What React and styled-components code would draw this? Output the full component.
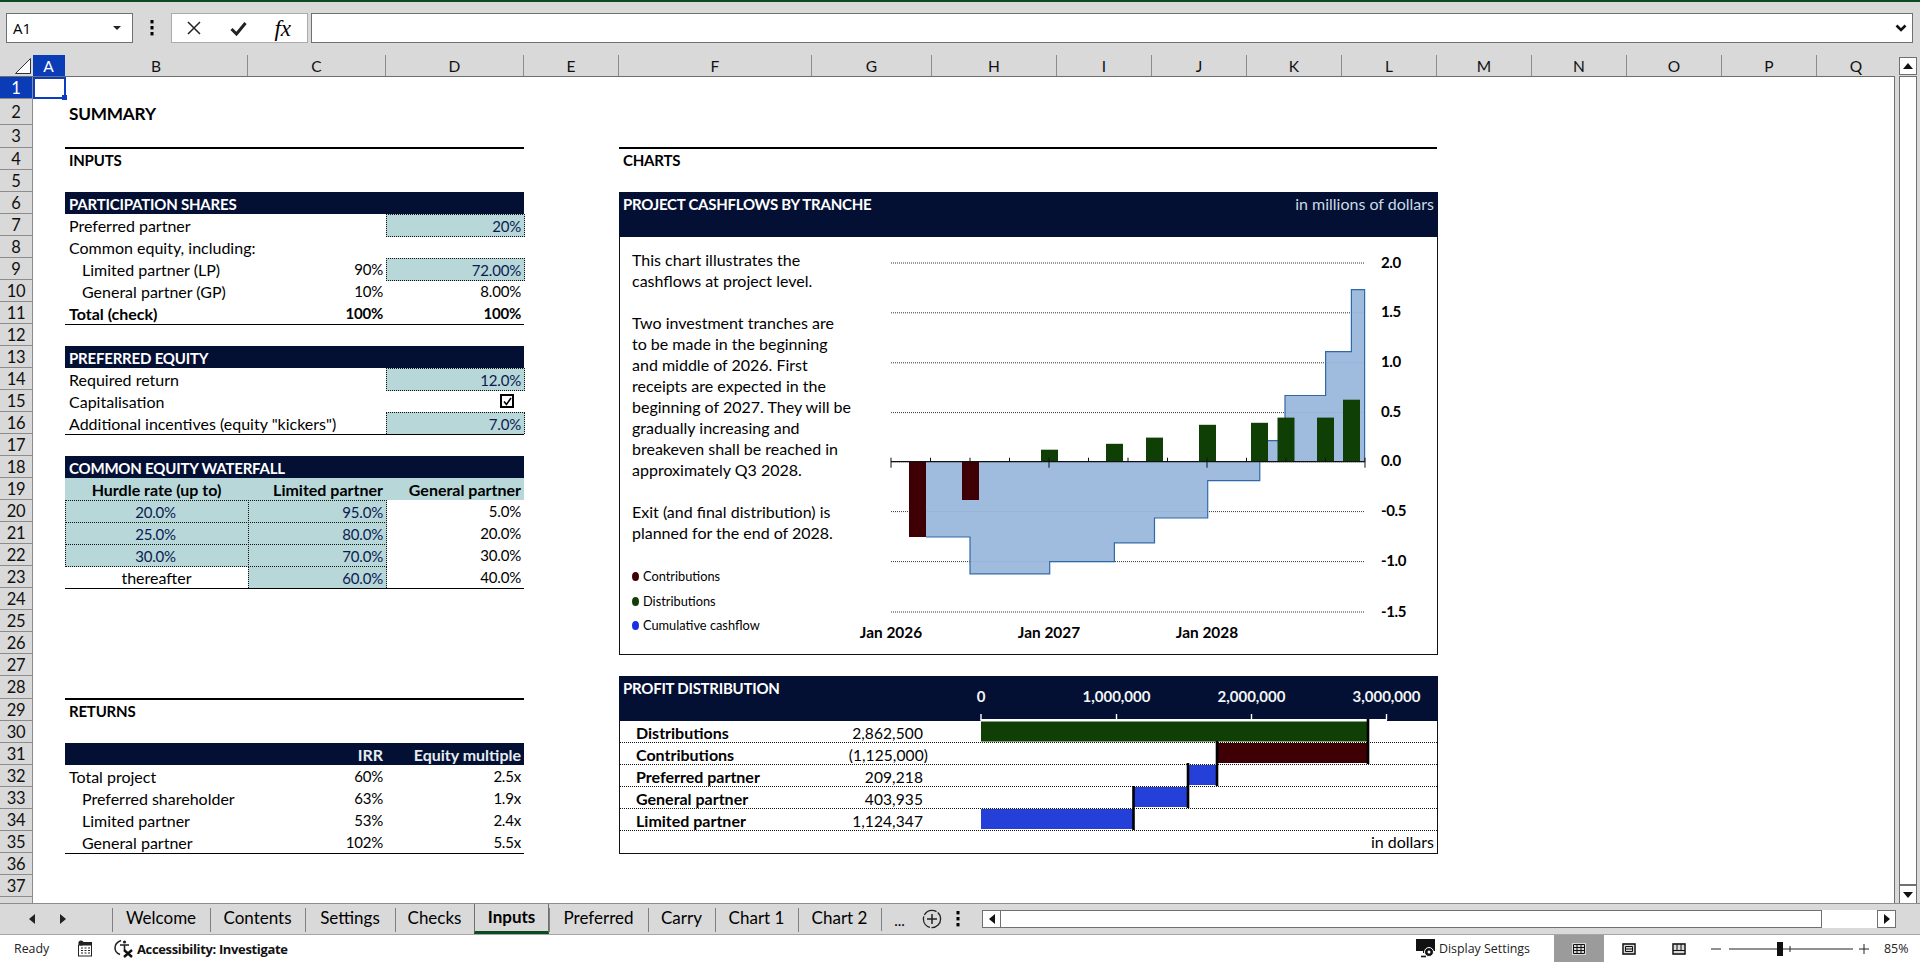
import React from 'react';
import styled, { createGlobalStyle } from 'styled-components';

const NAVY = '#030f33';
const TEAL = '#b7d7d9';
const GREEN = '#103f05';
const RED = '#3f0005';
const BLUE = '#2540d9';

const GlobalStyle = createGlobalStyle`
  html, body { margin: 0; padding: 0; background: #fff; }
  body { font-family: Lato, "Liberation Sans", sans-serif; color: #000; }
  * { box-sizing: border-box; }
`;

const Page = styled.div`
  width: 1920px;
  height: 962px;
  overflow: hidden;
  display: flex;
  flex-direction: column;
  background: #d9d9d9;
`;

/* formula bar */
const FormulaBar = styled.div`
  height: 55px;
  flex: none;
  display: flex;
  align-items: stretch;
  padding: 11px 7px 12px 6px;
  border-top: 2px solid #0c4a22;
`;
const NameBox = styled.div`
  width: 127px;
  background: #fff;
  border: 1px solid #707070;
  display: flex;
  align-items: center;
  justify-content: space-between;
  padding: 0 11px 0 6px;
  font-family: "Open Sans", sans-serif;
  font-size: 15px;
`;
const Caret = styled.span`
  width: 0;
  height: 0;
  border-left: 4px solid transparent;
  border-right: 4px solid transparent;
  border-top: 4px solid #222;
`;
const BarDots = styled.div`
  width: 38px;
  display: flex;
  align-items: center;
  justify-content: center;
`;
const FxBox = styled.div`
  width: 137px;
  background: #fff;
  border: 1px solid #ababab;
  display: flex;
  align-items: center;
  justify-content: space-between;
  padding: 0 16px 0 14px;
`;
const FxText = styled.span`
  font-family: "Liberation Serif", serif;
  font-style: italic;
  font-size: 23px;
  line-height: 1;
`;
const FormulaInput = styled.div`
  flex: 1;
  margin-left: 3px;
  background: #fff;
  border: 1px solid #707070;
  display: flex;
  align-items: center;
  justify-content: flex-end;
  padding-right: 5px;
`;

/* sheet frame */
const SheetFrame = styled.div`
  height: 848px;
  flex: none;
  display: flex;
`;
const MainArea = styled.div`
  width: 1895px;
  display: flex;
  flex-direction: column;
`;
const ColHead = styled.div`
  height: 22px;
  flex: none;
  display: flex;
  border-bottom: 1px solid #6e6e6e;
`;
const Corner = styled.div`
  width: 33px;
  display: flex;
  align-items: flex-end;
  justify-content: flex-end;
  padding: 0 2px 2px 0;
`;
const ColLabel = styled.div`
  width: ${(p) => p.$w}px;
  flex: none;
  display: flex;
  align-items: center;
  justify-content: center;
  font-size: 15.5px;
  padding-top: 1px;
  border-right: 1px solid ${(p) => (p.$active ? '#0b3cb8' : '#8c8c8c')};
  background: ${(p) => (p.$active ? '#0b3cb8' : 'transparent')};
  color: ${(p) => (p.$active ? '#fff' : '#111')};
  &:last-child { border-right: none; }
`;
const SheetBody = styled.div`
  flex: 1;
  display: flex;
  overflow: hidden;
`;
const RowHeads = styled.div`
  width: 33px;
  flex: none;
  display: flex;
  flex-direction: column;
  border-right: 1px solid #8c8c8c;
`;
const RowLabel = styled.div`
  height: ${(p) => p.$h}px;
  flex: none;
  display: flex;
  align-items: center;
  justify-content: center;
  font-size: 16.5px;
  letter-spacing: -0.3px;
  border-bottom: 1px solid #8c8c8c;
  background: ${(p) => (p.$active ? '#0b3cb8' : 'transparent')};
  color: ${(p) => (p.$active ? '#fff' : '#111')};
`;
const Cells = styled.div`
  flex: 1;
  background: #fff;
  display: grid;
  overflow: hidden;
  border-right: 1px solid #707070;
  grid-template-columns: ${(p) => p.$cols};
  grid-template-rows: ${(p) => p.$rows};
  font-size: 16px;
`;
const SelectedCell = styled.div`
  grid-column: 1;
  grid-row: 1;
  position: relative;
  border: 2px solid #0b3cc4;
  margin: 0 -1px 0 0;
  &::after {
    content: '';
    position: absolute;
    right: -3px;
    bottom: -3px;
    width: 5px;
    height: 5px;
    background: #0b3cc4;
  }
`;
const SheetTitle = styled.div`
  grid-column: 2 / 5;
  grid-row: 2;
  display: flex;
  align-items: center;
  padding: 2px 0 0 4px;
  font-weight: 700;
  font-size: 17.2px;
  letter-spacing: -0.2px;
`;
const SectionHead = styled.div`
  grid-column: ${(p) => p.$col};
  grid-row: ${(p) => p.$row};
  margin-top: -1px;
  border-top: 2px solid #000;
  display: flex;
  align-items: center;
  padding: 1px 0 0 4px;
  font-weight: 700;
  font-size: 15px;
  letter-spacing: -0.2px;
`;
const Table = styled.div`
  grid-column: 2 / 5;
  grid-row: ${(p) => p.$row};
  display: grid;
  grid-template-columns: 183px 138px 138px;
  grid-auto-rows: 22px;
  box-shadow: 0 1px 0 #000;
`;
const Band = styled.div`
  grid-column: 1 / -1;
  background: ${NAVY};
  color: #fff;
  font-weight: 700;
  font-size: 15px;
  letter-spacing: -0.2px;
  display: flex;
  align-items: center;
  padding: 1px 0 0 4px;
`;
const ReturnsBand = styled.div`
  grid-column: 1 / -1;
  display: grid;
  grid-template-columns: 183px 138px 138px;
  background: ${NAVY};
  color: #e4edf2;
  font-weight: 700;
`;
const Label = styled.div`
  grid-column: ${(p) => (p.$span ? '1 / 3' : '1')};
  display: flex;
  align-items: center;
  white-space: nowrap;
  padding-left: ${(p) => (p.$indent ? 17 : 4)}px;
  font-weight: ${(p) => (p.$bold ? 700 : 400)};
`;
const Num = styled.div`
  grid-column: ${(p) => p.$c || 'auto'};
  display: flex;
  align-items: center;
  white-space: nowrap;
  justify-content: ${(p) => (p.$center ? 'center' : 'flex-end')};
  padding-right: ${(p) => (p.$center ? 0 : 3)}px;
  font-weight: ${(p) => (p.$bold ? 700 : 400)};
  font-size: 15px;
  letter-spacing: -0.2px;
`;
const Input = styled(Num)`
  background: ${TEAL};
  color: #0b1b52;
  border: 1px dotted #111;
  margin-right: -1px;
  margin-bottom: ${(p) => (p.$end ? 0 : -1)}px;
  border-bottom: ${(p) => (p.$end ? 'none' : '1px dotted #111')};
  padding-right: 3px;
`;
const HeadCell = styled(Num)`
  background: ${TEAL};
  font-weight: 700;
  font-size: 16px;
  letter-spacing: 0;
`;
const HeadText = styled(Num)`
  font-size: 16px;
  letter-spacing: 0;
`;
const Tick = styled.div`
  grid-column: 3;
  display: flex;
  align-items: center;
  justify-content: flex-end;
  padding-right: 10px;
`;
const CheckBox = styled.span`
  width: 14px;
  height: 14px;
  border: 2px solid #000;
  display: flex;
  align-items: center;
  justify-content: center;
`;

/* chart panels */
const ChartPanel = styled.div`
  grid-column: 6 / 13;
  grid-row: ${(p) => p.$row};
  border: 1px solid #111;
  display: flex;
  flex-direction: column;
  position: relative;
  margin-right: -1px;
  margin-bottom: -1px;
`;
const PanelBand = styled.div`
  height: 45px;
  margin: -1px -1px 0;
  flex: none;
  background: ${NAVY};
  display: flex;
  justify-content: space-between;
  padding: 1px 4px 0 4px;
  line-height: 22px;
  color: #fff;
  font-weight: 700;
  font-size: 15px;
  letter-spacing: -0.25px;
`;
const BandNote = styled.span`
  font-weight: 400;
  font-size: 16px;
  letter-spacing: 0;
  color: #c9dbe3;
`;
const PanelBody = styled.div`
  flex: 1;
  display: flex;
`;
const Notes = styled.div`
  width: 181px;
  flex: none;
  padding: 12px 0 0 12px;
  line-height: 21px;
  white-space: nowrap;
  font-size: 16px;
`;
const Para = styled.p`
  margin: 0 0 21px;
`;
const Legend = styled.ul`
  list-style: none;
  margin: 7px 0 0;
  padding: 0;
  font-size: 12.8px;
`;
const LegendItem = styled.li`
  height: 24.7px;
  display: flex;
  align-items: center;
  gap: 4px;
  &::before {
    content: '';
    width: 7px;
    height: 9px;
    border-radius: 50%;
    background: ${(p) => p.$color};
  }
`;
const ProfitRows = styled.div`
  display: flex;
  flex-direction: column;
`;
const ProfitRow = styled.div`
  height: 22px;
  display: grid;
  align-items: center;
  border-bottom: 1px dotted #111;
  padding: 2px 0 0 16px;
  grid-template-columns: 160px 127px 1fr;
`;
const ProfitName = styled.span`
  font-weight: 700;
  white-space: nowrap;
`;
const ProfitValue = styled.span`
  text-align: right;
  white-space: nowrap;
  font-size: 15.5px;
  letter-spacing: 0.1px;
  margin-right: ${(p) => (p.$neg ? -5 : 0)}px;
`;
const ProfitNote = styled.div`
  height: 21px;
  display: flex;
  align-items: center;
  justify-content: flex-end;
  padding-right: 3px;
`;
const WaterfallOverlay = styled.svg`
  position: absolute;
  left: -1px;
  top: -1px;
  pointer-events: none;
`;

/* vertical scrollbar */
const ScrollCol = styled.div`
  width: 25px;
  flex: none;
  display: flex;
  flex-direction: column;
  padding: 2px 3px 0 4px;
`;
const ScrollBtn = styled.div`
  width: 18px;
  height: ${(p) => p.$h || 18}px;
  flex: none;
  background: #fff;
  border: 1px solid #707070;
  display: flex;
  align-items: center;
  justify-content: center;
`;
const ScrollThumb = styled.div`
  width: 18px;
  height: 809px;
  flex: none;
  margin-top: 1px;
  background: #fff;
  border: 1px solid #707070;
`;

/* tabs */
const TabBar = styled.div`
  height: 32px;
  flex: none;
  display: flex;
  align-items: stretch;
  border-top: 1px solid #8c8c8c;
  border-bottom: 1px solid #a6a6a6;
`;
const TabNav = styled.div`
  width: 112px;
  flex: none;
  display: flex;
  align-items: center;
  padding: 0 0 0 29px;
  gap: 25px;
`;
const Tab = styled.div`
  width: ${(p) => p.$w}px;
  flex: none;
  display: flex;
  align-items: center;
  justify-content: center;
  font-size: 17px;
  font-weight: ${(p) => (p.$active ? 700 : 400)};
  position: relative;
  padding-bottom: 3px;
  border-left: ${(p) => (p.$active ? '1px solid #707070' : 'none')};
  border-right: ${(p) => (p.$active ? '1px solid #707070' : 'none')};
  border-bottom: ${(p) => (p.$active ? '3px solid #0c4a22' : 'none')};
  &::before {
    content: '';
    display: ${(p) => (p.$active ? 'none' : 'block')};
    position: absolute;
    left: 0;
    top: 4px;
    height: 24px;
    width: 1px;
    background: #808080;
  }
`;
const TabMore = styled.div`
  width: 36px;
  flex: none;
  display: flex;
  align-items: center;
  justify-content: center;
  font-size: 15px;
  position: relative;
  border-left: 1px solid #808080;
  margin: 4px 0 3px;
`;
const TabTools = styled.div`
  width: 65px;
  flex: none;
  display: flex;
  align-items: center;
  gap: 14px;
  padding-left: 5px;
`;
const HScroll = styled.div`
  width: 914px;
  flex: none;
  margin: 6px 0 6px;
  display: flex;
`;
const HBtn = styled.div`
  width: 19px;
  flex: none;
  background: #fff;
  border: 1px solid #707070;
  display: flex;
  align-items: center;
  justify-content: center;
`;
const HThumb = styled.div`
  width: 821px;
  flex: none;
  background: #fff;
  border: 1px solid #707070;
  border-left: none;
`;
const HGap = styled.div`
  flex: 1;
  background: #fff;
`;

/* status bar */
const StatusBar = styled.div`
  flex: 1;
  background: #fff;
  display: flex;
  align-items: center;
  font-family: "Open Sans", sans-serif;
  font-size: 12.4px;
  color: #222;
`;
const StatusLeft = styled.div`
  display: flex;
  align-items: center;
  flex: 1;
  padding-left: 14px;
`;
const Ready = styled.span`
  width: 63px;
`;
const StatusIcon = styled.span`
  display: flex;
  align-items: center;
  margin-right: ${(p) => p.$gap || 0}px;
`;
const Access = styled.span`
  font-weight: 700;
  font-size: 13px;
  letter-spacing: -0.35px;
  color: #111;
`;
const DisplaySettings = styled.div`
  width: 138px;
  flex: none;
  display: flex;
  align-items: center;
  gap: 3px;
`;
const ViewBtn = styled.div`
  width: 50px;
  align-self: stretch;
  flex: none;
  display: flex;
  align-items: center;
  justify-content: center;
  background: ${(p) => (p.$active ? '#9b9b9b' : 'transparent')};
`;
const ZoomBox = styled.div`
  width: 216px;
  flex: none;
  display: flex;
  align-items: center;
  padding-left: 7px;
`;
const ZoomPct = styled.span`
  margin-left: 15px;
  font-size: 12.4px;
`;

const COLUMNS = [
  ['A', 32], ['B', 183], ['C', 138], ['D', 138], ['E', 95], ['F', 193], ['G', 120], ['H', 125],
  ['I', 95], ['J', 95], ['K', 95], ['L', 95], ['M', 95], ['N', 95], ['O', 95], ['P', 95], ['Q', 78],
];
const ROW_HEIGHTS = Array.from({ length: 38 }, (_, i) => {
  if (i === 1) return 26;
  if (i === 2 || i === 27) return 23;
  return 22;
});

const yGrid = [
  ['2.0', 263], ['1.5', 312.8], ['1.0', 362.8], ['0.5', 412.6], ['0.0', 461.7],
  ['-0.5', 511.6], ['-1.0', 561.6], ['-1.5', 612],
];
const distributions = [
  [1040, 449.7], [1105, 443.8], [1145, 437.6], [1198, 424.8],
  [1250, 422.8], [1276.5, 417.6], [1316, 417.6], [1342, 399.7],
];
const contributions = [[908, 537], [961, 500]];
const ZERO = 461.7;

function CashflowChart() {
  const ticks = Array.from({ length: 13 }, (_, i) => 890 + i * 39.5);
  const neg = 'V537 H969 V573.8 H1048.7 V561.7 H1113.4 V542.8 H1153.5 V518 H1206.7 V480.7 H1258.8 V461.7';
  const pos = 'M1258.8 461.7 V440.7 H1284 V395.5 H1324.6 V351.7 H1350.4 V289.7 H1363.6 V461.7';
  return (
    <svg width="636" height="417" viewBox="800 237 636 417">
      {yGrid.map(([label, y]) => (
        <g key={label}>
          <line x1="890" x2="1364" y1={y} y2={y} stroke="#333" strokeDasharray="1 1" />
          <text x="1380" y={y + 4.5} fontSize="15" fontWeight="700" fontFamily="Lato" letterSpacing="-0.4">{label}</text>
        </g>
      ))}
      <path d={`M925 ${ZERO} ${neg} Z`} fill="#98b6da" fillOpacity="0.93" />
      <path d={`${pos} Z`} fill="#98b6da" fillOpacity="0.93" />
      <path d="M925 537 H969 V573.8 H1048.7 V561.7 H1113.4 V542.8 H1153.5 V518 H1206.7 V480.7 H1258.8 V461.7" fill="none" stroke="#2f6aa6" strokeWidth="1.2" />
      <path d={pos} fill="none" stroke="#2f6aa6" strokeWidth="1.2" />
      {contributions.map(([x, y]) => (
        <rect key={x} x={x} y={ZERO} width="17" height={y - ZERO} fill={RED} />
      ))}
      {distributions.map(([x, y]) => (
        <rect key={x} x={x} y={y} width="17" height={ZERO - y} fill={GREEN} />
      ))}
      <line x1="890" x2="1364" y1={ZERO} y2={ZERO} stroke="#111" strokeWidth="1.2" />
      {ticks.map((x, i) =>
        i % 4 === 0 ? (
          <line key={x} x1={x} x2={x} y1={ZERO - 4} y2={ZERO + 6} stroke="#111" />
        ) : (
          <line key={x} x1={x} x2={x} y1={ZERO - 4} y2={ZERO} stroke="#111" />
        )
      )}
      {[['Jan 2026', 890], ['Jan 2027', 1048], ['Jan 2028', 1206]].map(([t, x]) => (
        <text key={t} x={x} y="638" textAnchor="middle" fontSize="15.4" fontWeight="700" fontFamily="Lato">{t}</text>
      ))}
    </svg>
  );
}

function WaterfallChart() {
  const bars = [
    [981, 721.5, 387, GREEN],
    [1217, 743, 151, RED],
    [1188, 765, 29, BLUE],
    [1134, 787, 54, BLUE],
    [981, 809, 153, BLUE],
  ];
  const joins = [
    [1368, 719, 764],
    [1217, 741, 786],
    [1188, 763, 808],
    [1133.5, 786, 830],
  ];
  const axis = [['0', 981], ['1,000,000', 1116.5], ['2,000,000', 1251.5], ['3,000,000', 1386.5]];
  return (
    <WaterfallOverlay width="820" height="178" viewBox="619 676 820 178">
      {axis.map(([t, x]) => (
        <g key={t}>
          <text x={x} y="702" textAnchor="middle" fontSize="15" fontWeight="700" fontFamily="Lato" fill="#f1f5f7">{t}</text>
          <line x1={x} x2={x} y1="714" y2="720" stroke="#fff" strokeWidth="1.4" />
        </g>
      ))}
      <line x1="980.5" x2="1387" y1="720" y2="720" stroke="#fff" strokeWidth="1.8" />
      {bars.map(([x, y, w, c]) => (
        <rect key={y} x={x} y={y} width={w} height="20" fill={c} />
      ))}
      {joins.map(([x, a, b]) => (
        <line key={x} x1={x} x2={x} y1={a} y2={b} stroke="#000" strokeWidth="2.6" />
      ))}
    </WaterfallOverlay>
  );
}

function App() {
  const gridCols = COLUMNS.map((c) => `${c[1]}px`).join(' ');
  const gridRows = ROW_HEIGHTS.map((h) => `${h}px`).join(' ');
  return (
    <Page>
      <GlobalStyle />
      <FormulaBar>
        <NameBox>A1<Caret /></NameBox>
        <BarDots>
          <svg width="4" height="16"><rect x="0.5" y="0" width="3" height="3.4" /><rect x="0.5" y="6" width="3" height="3.4" /><rect x="0.5" y="12" width="3" height="3.4" /></svg>
        </BarDots>
        <FxBox>
          <svg width="16" height="16" viewBox="0 0 16 16"><path d="M2 2 L14 14 M14 2 L2 14" stroke="#222" strokeWidth="1.5" fill="none" /></svg>
          <svg width="17" height="15" viewBox="0 0 17 15"><path d="M1.5 8 L6.5 13 L15.5 2" stroke="#222" strokeWidth="3" fill="none" /></svg>
          <FxText>fx</FxText>
        </FxBox>
        <FormulaInput>
          <svg width="12" height="8" viewBox="0 0 12 8"><path d="M1.5 1.5 L6 6 L10.5 1.5" stroke="#111" strokeWidth="2.6" fill="none" /></svg>
        </FormulaInput>
      </FormulaBar>

      <SheetFrame>
        <MainArea>
          <ColHead>
            <Corner>
              <svg width="16" height="16" viewBox="0 0 16 16"><path d="M15.5 0.5 V15.5 H0.5 Z" fill="#fff" stroke="#333" /></svg>
            </Corner>
            {COLUMNS.map(([name, w], i) => (
              <ColLabel key={name} $w={w} $active={i === 0}>{name}</ColLabel>
            ))}
          </ColHead>
          <SheetBody>
            <RowHeads>
              {ROW_HEIGHTS.map((h, i) => (
                <RowLabel key={i} $h={h} $active={i === 0}>{i < 37 ? i + 1 : ''}</RowLabel>
              ))}
            </RowHeads>
            <Cells $cols={gridCols} $rows={gridRows}>
              <SelectedCell />
              <SheetTitle>SUMMARY</SheetTitle>

              <SectionHead $col="2 / 5" $row="4">INPUTS</SectionHead>
              <Table $row="6 / 12">
                <Band>PARTICIPATION SHARES</Band>
                <Label>Preferred partner</Label>
                <Input $c="3">20%</Input>
                <Label $span>Common equity, including:</Label>
                <Num $c="3" />
                <Label $indent>Limited partner (LP)</Label>
                <Num>90%</Num>
                <Input>72.00%</Input>
                <Label $indent>General partner (GP)</Label>
                <Num>10%</Num>
                <Num>8.00%</Num>
                <Label $bold>Total (check)</Label>
                <Num $bold>100%</Num>
                <Num $bold>100%</Num>
              </Table>

              <Table $row="13 / 17">
                <Band>PREFERRED EQUITY</Band>
                <Label>Required return</Label>
                <Input $c="3">12.0%</Input>
                <Label>Capitalisation</Label>
                <Tick>
                  <CheckBox>
                    <svg width="9" height="9" viewBox="0 0 9 9"><path d="M1 4.5 L3.5 7.5 L8 1" stroke="#000" strokeWidth="1.6" fill="none" /></svg>
                  </CheckBox>
                </Tick>
                <Label $span>Additional incentives (equity "kickers")</Label>
                <Input $c="3" $end>7.0%</Input>
              </Table>

              <Table $row="18 / 24">
                <Band>COMMON EQUITY WATERFALL</Band>
                <HeadCell $center>Hurdle rate (up to)</HeadCell>
                <HeadCell>Limited partner</HeadCell>
                <HeadCell>General partner</HeadCell>
                <Input $center>20.0%</Input>
                <Input>95.0%</Input>
                <Num>5.0%</Num>
                <Input $center>25.0%</Input>
                <Input>80.0%</Input>
                <Num>20.0%</Num>
                <Input $center>30.0%</Input>
                <Input>70.0%</Input>
                <Num>30.0%</Num>
                <HeadText $center>thereafter</HeadText>
                <Input $end>60.0%</Input>
                <Num>40.0%</Num>
              </Table>

              <SectionHead $col="2 / 5" $row="29">RETURNS</SectionHead>
              <Table $row="31 / 36">
                <ReturnsBand>
                  <span />
                  <HeadText $bold>IRR</HeadText>
                  <HeadText $bold>Equity multiple</HeadText>
                </ReturnsBand>
                <Label>Total project</Label>
                <Num>60%</Num>
                <Num>2.5x</Num>
                <Label $indent>Preferred shareholder</Label>
                <Num>63%</Num>
                <Num>1.9x</Num>
                <Label $indent>Limited partner</Label>
                <Num>53%</Num>
                <Num>2.4x</Num>
                <Label $indent>General partner</Label>
                <Num>102%</Num>
                <Num>5.5x</Num>
              </Table>

              <SectionHead $col="6 / 13" $row="4">CHARTS</SectionHead>
              <ChartPanel $row="6 / 27">
                <PanelBand>
                  PROJECT CASHFLOWS BY TRANCHE
                  <BandNote>in millions of dollars</BandNote>
                </PanelBand>
                <PanelBody>
                  <Notes>
                    <Para>This chart illustrates the<br />cashflows at project level.</Para>
                    <Para>
                      Two investment tranches are<br />to be made in the beginning<br />and middle of 2026. First<br />
                      receipts are expected in the<br />beginning of 2027. They will be<br />gradually increasing and<br />
                      breakeven shall be reached in<br />approximately Q3 2028.
                    </Para>
                    <Para>Exit (and final distribution) is<br />planned for the end of 2028.</Para>
                    <Legend>
                      <LegendItem $color={RED}>Contributions</LegendItem>
                      <LegendItem $color={GREEN}>Distributions</LegendItem>
                      <LegendItem $color="#1a2fe0">Cumulative cashflow</LegendItem>
                    </Legend>
                  </Notes>
                  <CashflowChart />
                </PanelBody>
              </ChartPanel>

              <ChartPanel $row="28 / 36">
                <PanelBand>PROFIT DISTRIBUTION</PanelBand>
                <ProfitRows>
                  <ProfitRow><ProfitName>Distributions</ProfitName><ProfitValue>2,862,500</ProfitValue></ProfitRow>
                  <ProfitRow><ProfitName>Contributions</ProfitName><ProfitValue $neg>(1,125,000)</ProfitValue></ProfitRow>
                  <ProfitRow><ProfitName>Preferred partner</ProfitName><ProfitValue>209,218</ProfitValue></ProfitRow>
                  <ProfitRow><ProfitName>General partner</ProfitName><ProfitValue>403,935</ProfitValue></ProfitRow>
                  <ProfitRow><ProfitName>Limited partner</ProfitName><ProfitValue>1,124,347</ProfitValue></ProfitRow>
                </ProfitRows>
                <ProfitNote>in dollars</ProfitNote>
                <WaterfallChart />
              </ChartPanel>
            </Cells>
          </SheetBody>
        </MainArea>
        <ScrollCol>
          <ScrollBtn>
            <svg width="10" height="6"><path d="M0 6 L5 0 L10 6 Z" fill="#111" /></svg>
          </ScrollBtn>
          <ScrollThumb />
          <ScrollBtn $h={19}>
            <svg width="10" height="6"><path d="M0 0 L5 6 L10 0 Z" fill="#111" /></svg>
          </ScrollBtn>
        </ScrollCol>
      </SheetFrame>

      <TabBar>
        <TabNav>
          <svg width="6" height="10"><path d="M6 0 V10 L0 5 Z" fill="#222" /></svg>
          <svg width="6" height="10"><path d="M0 0 V10 L6 5 Z" fill="#222" /></svg>
        </TabNav>
        <Tab $w={98}>Welcome</Tab>
        <Tab $w={95}>Contents</Tab>
        <Tab $w={90}>Settings</Tab>
        <Tab $w={79}>Checks</Tab>
        <Tab $w={75} $active>Inputs</Tab>
        <Tab $w={99}>Preferred</Tab>
        <Tab $w={67}>Carry</Tab>
        <Tab $w={83}>Chart 1</Tab>
        <Tab $w={83}>Chart 2</Tab>
        <TabMore>...</TabMore>
        <TabTools>
          <svg width="20" height="20" viewBox="0 0 20 20"><circle cx="10" cy="10" r="8.6" fill="none" stroke="#222" strokeWidth="1.3" strokeDasharray="14 1.5" /><path d="M10 5 V15 M5 10 H15" stroke="#222" strokeWidth="1.5" /></svg>
          <svg width="4" height="16"><rect x="0.5" y="0" width="3" height="3.4" /><rect x="0.5" y="6" width="3" height="3.4" /><rect x="0.5" y="12" width="3" height="3.4" /></svg>
        </TabTools>
        <HScroll>
          <HBtn><svg width="6" height="10"><path d="M6 0 V10 L0 5 Z" fill="#111" /></svg></HBtn>
          <HThumb />
          <HGap />
          <HBtn><svg width="6" height="10"><path d="M0 0 V10 L6 5 Z" fill="#111" /></svg></HBtn>
        </HScroll>
      </TabBar>

      <StatusBar>
        <StatusLeft>
          <Ready>Ready</Ready>
          <StatusIcon $gap={21}>
            <svg width="16" height="17" viewBox="0 0 16 17">
              <circle cx="4" cy="3" r="2.6" fill="#222" />
              <rect x="2" y="2" width="13" height="3" fill="#222" />
              <rect x="1.5" y="5" width="13" height="11" fill="none" stroke="#222" />
              <path d="M4 8 H6 M7.5 8 H9.5 M11 8 H13 M4 10.5 H6 M7.5 10.5 H9.5 M11 10.5 H13 M4 13 H6 M7.5 13 H9.5 M11 13 H13" stroke="#222" />
            </svg>
          </StatusIcon>
          <StatusIcon $gap={3}>
            <svg width="20" height="19" viewBox="0 0 20 19">
              <path d="M7 1.5 C3 3 1 6 1 9 C1 12 3 14.5 6 15.5" fill="none" stroke="#222" strokeWidth="1.5" />
              <circle cx="10.5" cy="3" r="1.6" fill="#222" />
              <path d="M6 6 H15 M10.5 6 V11" stroke="#222" strokeWidth="1.6" />
              <path d="M10 11 L18 18 M18 11 L10 18" stroke="#111" strokeWidth="2.4" />
            </svg>
          </StatusIcon>
          <Access>Accessibility: Investigate</Access>
        </StatusLeft>
        <DisplaySettings>
          <svg width="20" height="19" viewBox="0 0 20 19">
            <path d="M0 0 H19 V12 H12 V14 H7 V12 H0 Z" fill="#111" />
            <circle cx="13" cy="13" r="4.5" fill="#111" stroke="#fff" />
            <circle cx="13" cy="13" r="1.5" fill="#fff" />
            <path d="M5 17.5 H10" stroke="#111" strokeWidth="1.6" />
          </svg>
          Display Settings
        </DisplaySettings>
        <ViewBtn $active>
          <svg width="14" height="12" viewBox="0 0 14 12"><rect width="14" height="12" fill="#d9d9d9" /><path d="M1.5 1.5 H12.5 V10.5 H1.5 Z M1.5 4.5 H12.5 M1.5 7.5 H12.5 M5 1.5 V10.5 M9 1.5 V10.5" fill="none" stroke="#111" /></svg>
        </ViewBtn>
        <ViewBtn>
          <svg width="14" height="12" viewBox="0 0 14 12"><rect width="14" height="12" fill="#d9d9d9" /><path d="M1 1 H13 V11 H1 Z" fill="none" stroke="#111" strokeWidth="1.4" /><path d="M3.5 3.5 H10.5 V8.5 H3.5 Z M3.5 6 H10.5" fill="none" stroke="#111" /></svg>
        </ViewBtn>
        <ViewBtn>
          <svg width="14" height="12" viewBox="0 0 14 12"><rect width="14" height="12" fill="#d9d9d9" /><path d="M1 1 H13 V11 H1 Z" fill="none" stroke="#111" strokeWidth="1.4" /><path d="M1 7.5 H13 M5 1 V7.5 M9 1 V7.5" fill="none" stroke="#111" /></svg>
        </ViewBtn>
        <ZoomBox>
          <svg width="148" height="16" viewBox="0 0 148 16">
            <path d="M0 8 H10 M18 8 H142" stroke="#222" />
            <rect x="66" y="1" width="6" height="14" fill="#111" />
            <path d="M79 5 V11" stroke="#222" />
          </svg>
          <svg width="10" height="10" viewBox="0 0 10 10"><path d="M0 5 H10 M5 0 V10" stroke="#222" /></svg>
          <ZoomPct>85%</ZoomPct>
        </ZoomBox>
      </StatusBar>
    </Page>
  );
}

export default App;
